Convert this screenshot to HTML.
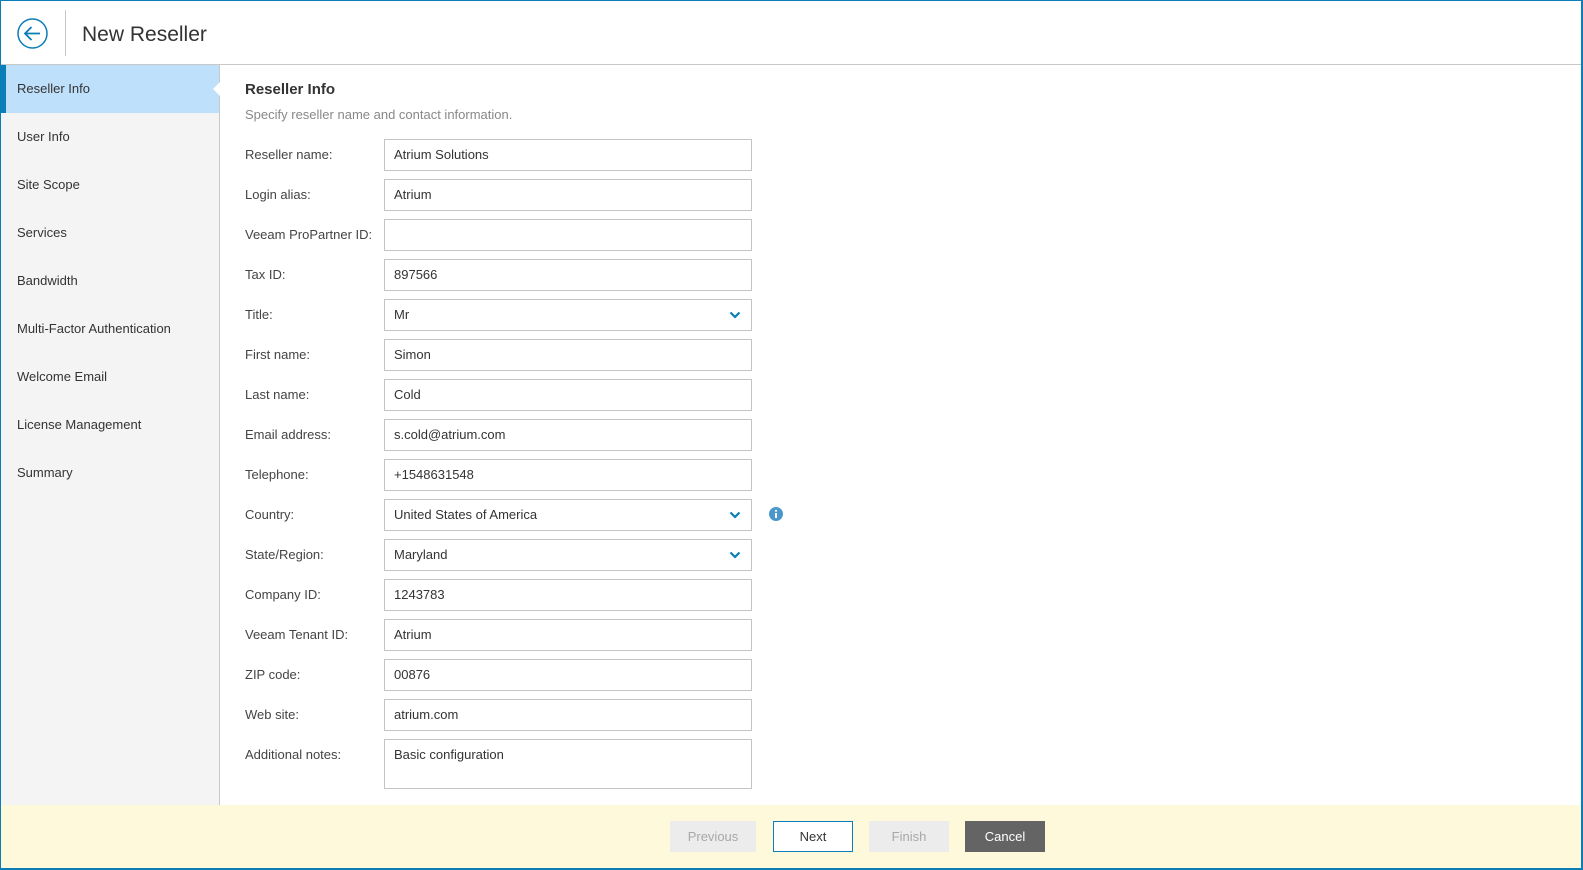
<!DOCTYPE html>
<html><head><meta charset="utf-8"><style>
*{box-sizing:border-box;margin:0;padding:0}
html,body{width:1583px;height:870px;overflow:hidden;background:#fff;font-family:"Liberation Sans",sans-serif;font-size:13px;color:#333}
#frame{position:absolute;left:0;top:0;width:1583px;height:870px;border:1px solid #0b7db7;border-bottom-width:2px;border-right-width:2px}
#hdr{position:absolute;left:0;top:0;width:1581px;height:65px;border-bottom:1px solid #c8c8c8;background:#fff}
#back{position:absolute;left:17px;top:18px}
#div{position:absolute;left:65px;top:10px;width:1px;height:46px;background:#c8c8c8}
#title{position:absolute;left:82px;top:23px;font-size:21px;color:#333}
#side{position:absolute;left:1px;top:65px;width:219px;height:740px;background:#f4f4f4;border-right:1px solid #c8c8c8}
.it{height:48px;line-height:47px;padding-left:16px;color:#333}
.it.act{background:#bfe0fb;border-left:5px solid #0b7db7;padding-left:11px;position:relative}
.it.act:after{content:"";position:absolute;right:-1px;top:17px;border:7px solid transparent;border-right-color:#fff}
h1{position:absolute;left:245px;top:81px;font-size:15px;font-weight:bold;color:#333}
#sub{position:absolute;left:245px;top:107px;color:#888}
.lb{position:absolute;left:245px;color:#444}
.in{position:absolute;left:384px;width:368px;height:32px;border:1px solid #c4c4c4;padding-left:9px;line-height:30px;color:#333;background:#fff}
.chev{position:absolute;right:10px;top:11px}
#foot{position:absolute;left:1px;top:805px;width:1580px;height:63px;background:#fef9db}
.b{position:absolute;top:821px;height:31px;line-height:31px;text-align:center;font-size:13px}
</style></head><body>
<div id="hdr">
<svg id="back" width="32" height="32" viewBox="0 0 32 32"><circle cx="15.5" cy="15.5" r="14.5" fill="none" stroke="#0b7db7" stroke-width="1.5"/><path d="M8 15.5H23M14.5 9L8 15.5L14.5 22" fill="none" stroke="#0b7db7" stroke-width="1.8"/></svg>
<div id="div"></div>
<div id="title">New Reseller</div>
</div>
<div id="side">
<div class="it act">Reseller Info</div>
<div class="it">User Info</div>
<div class="it">Site Scope</div>
<div class="it">Services</div>
<div class="it">Bandwidth</div>
<div class="it">Multi-Factor Authentication</div>
<div class="it">Welcome Email</div>
<div class="it">License Management</div>
<div class="it">Summary</div>
</div>
<h1>Reseller Info</h1>
<div id="sub">Specify reseller name and contact information.</div>

<div class="lb" style="top:147px">Reseller name:</div><div class="in" style="top:139px">Atrium Solutions</div>
<div class="lb" style="top:187px">Login alias:</div><div class="in" style="top:179px">Atrium</div>
<div class="lb" style="top:227px">Veeam ProPartner ID:</div><div class="in" style="top:219px"></div>
<div class="lb" style="top:267px">Tax ID:</div><div class="in" style="top:259px">897566</div>
<div class="lb" style="top:307px">Title:</div><div class="in" style="top:299px">Mr<svg class="chev" width="12" height="8" viewBox="0 0 12 8"><path d="M1.5 1.5L6 6L10.5 1.5" fill="none" stroke="#0b7db7" stroke-width="2.2"/></svg></div>
<div class="lb" style="top:347px">First name:</div><div class="in" style="top:339px">Simon</div>
<div class="lb" style="top:387px">Last name:</div><div class="in" style="top:379px">Cold</div>
<div class="lb" style="top:427px">Email address:</div><div class="in" style="top:419px">s.cold@atrium.com</div>
<div class="lb" style="top:467px">Telephone:</div><div class="in" style="top:459px">+1548631548</div>
<div class="lb" style="top:507px">Country:</div><div class="in" style="top:499px">United States of America<svg class="chev" width="12" height="8" viewBox="0 0 12 8"><path d="M1.5 1.5L6 6L10.5 1.5" fill="none" stroke="#0b7db7" stroke-width="2.2"/></svg></div>
<svg style="position:absolute;left:769px;top:507px" width="14" height="14" viewBox="0 0 14 14"><circle cx="7" cy="7" r="7" fill="#4a97cc"/><rect x="6" y="6" width="2" height="5" fill="#fff"/><circle cx="7" cy="3.8" r="1.1" fill="#fff"/></svg>
<div class="lb" style="top:547px">State/Region:</div><div class="in" style="top:539px">Maryland<svg class="chev" width="12" height="8" viewBox="0 0 12 8"><path d="M1.5 1.5L6 6L10.5 1.5" fill="none" stroke="#0b7db7" stroke-width="2.2"/></svg></div>
<div class="lb" style="top:587px">Company ID:</div><div class="in" style="top:579px">1243783</div>
<div class="lb" style="top:627px">Veeam Tenant ID:</div><div class="in" style="top:619px">Atrium</div>
<div class="lb" style="top:667px">ZIP code:</div><div class="in" style="top:659px">00876</div>
<div class="lb" style="top:707px">Web site:</div><div class="in" style="top:699px">atrium.com</div>
<div class="lb" style="top:747px">Additional notes:</div><div class="in" style="top:739px;height:50px;line-height:20px;padding-top:5px">Basic configuration</div>

<div id="foot"></div>
<div class="b" style="left:670px;width:86px;background:#ececec;color:#a8a8a8">Previous</div>
<div class="b" style="left:773px;width:80px;background:#fff;border:1px solid #0b7db7;line-height:29px;color:#333">Next</div>
<div class="b" style="left:869px;width:80px;background:#ececec;color:#a8a8a8">Finish</div>
<div class="b" style="left:965px;width:80px;background:#646464;color:#fff">Cancel</div>
<div id="frame"></div>
</body></html>
